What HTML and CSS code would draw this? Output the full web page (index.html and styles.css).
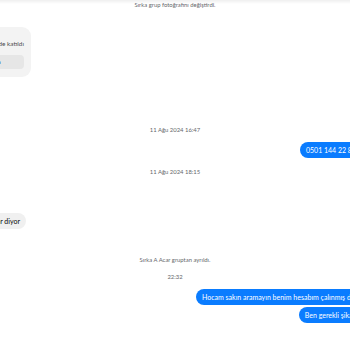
FILE: index.html
```html
<!DOCTYPE html>
<html lang="tr">
<head>
<meta charset="utf-8">
<link rel="stylesheet" href="styles.css">
</head>
<body>
<div class="chat">
  <div class="sys sys-first">Sırka grup fotoğrafını değiştirdi.</div>
  <div class="row-in row-card">
    <div class="card">
      <div class="card-text">Sırka 10 Ağu 24 tarihinde katıldı</div>
      <div class="card-btn">Sırka'ya el salla</div>
    </div>
  </div>
  <div class="sys sys-date1">11 Ağu 2024 16:47</div>
  <div class="row-out"><div class="bubble out">0501 144 22 85</div></div>
  <div class="sys sys-date2">11 Ağu 2024 18:15</div>
  <div class="row-in row-msg"><div class="bubble in">Hocam arayan olursa açmayın dolandırıcılar diyor</div></div>
  <div class="sys sys-left">Sırka A Acar gruptan ayrıldı.</div>
  <div class="sys sys-time">22:32</div>
  <div class="row-out row-first"><div class="bubble out">Hocam sakın aramayın benim hesabım çalınmış da.</div></div>
  <div class="row-out row-next"><div class="bubble out">Ben gerekli şikay</div></div>
</div>
</body>
</html>
```
FILE: styles.css
```css
html, body {
  margin: 0;
  padding: 0;
}
body {
  width: 350px;
  height: 350px;
  overflow: hidden;
  background: #fff linear-gradient(#efefef, #fff 4px) no-repeat;
  font-family: "Segoe UI", Lato, "Noto Sans", sans-serif;
  color: #050505;
}
.chat {
  display: flex;
  flex-direction: column;
  padding-top: 1px;
}
.sys {
  text-align: center;
  font-size: 5.9px;
  line-height: 8px;
  height: 8px;
  color: #65676b;
  white-space: nowrap;
}
.row-in {
  display: flex;
  justify-content: flex-end;
}
.row-card {
  width: 31px;
  margin-top: 18px;
}
.card {
  flex: none;
  background: #f3f3f3;
  border-radius: 9px;
  padding: 13px 7px 8px;
  display: flex;
  flex-direction: column;
  align-items: flex-end;
  gap: 7px;
}
.card-text {
  font-size: 6.4px;
  line-height: 8px;
  color: #4b4c4f;
  white-space: nowrap;
}
.card-btn {
  align-self: stretch;
  height: 14px;
  line-height: 14px;
  background: #e6e6e6;
  border-radius: 4px;
  font-size: 6.4px;
  font-weight: 700;
  text-align: center;
  white-space: nowrap;
}
.sys-date1 { margin-top: 49px; }
.row-out {
  display: flex;
  justify-content: flex-end;
  margin-right: -12px;
  margin-top: 8px;
}
.bubble {
  flex: none;
  height: 16px;
  line-height: 16px;
  border-radius: 8px;
  padding: 0 6px;
  font-size: 7px;
  white-space: nowrap;
}
.out {
  background: #0a7cff;
  color: #fff;
}
.in {
  background: #f0f0f0;
  color: #050505;
}
.sys-date2 { margin-top: 10px; }
.row-msg {
  width: 26px;
  margin-top: 37px;
}
.sys-left { margin-top: 27px; }
.sys-time { margin-top: 9px; }
.row-first { margin-top: 8px; }
.row-next { margin-top: 2px; }
```
